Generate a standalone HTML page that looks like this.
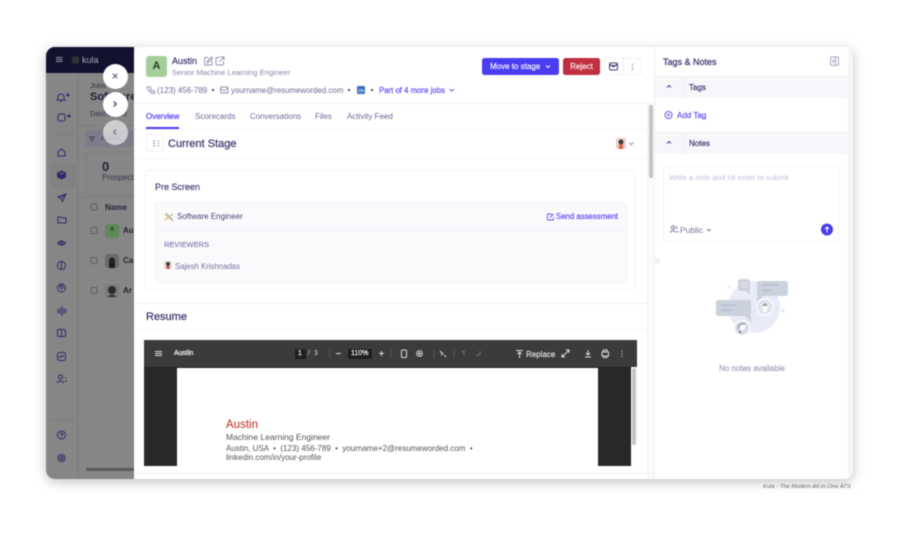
<!DOCTYPE html>
<html><head><meta charset="utf-8"><style>
html,body{margin:0;padding:0;background:#fff}
body{width:900px;height:538px;overflow:hidden;position:relative;font-family:"Liberation Sans",sans-serif}
#win{position:absolute;left:46px;top:47px;width:807px;height:432px;border-radius:9px;overflow:hidden;box-shadow:0 3px 12px rgba(0,0,0,.24);background:#f6f6f6}
.a{position:absolute;white-space:nowrap}
.m{-webkit-text-stroke:.25px}
.abs{position:absolute}
svg{position:absolute;overflow:visible}
#blur{position:absolute;left:0;top:0;width:900px;height:538px;filter:blur(.5px)}
</style></head><body><div id="blur">
<div id="win"></div>
<div class="abs" style="left:46px;top:47px;width:88px;height:432px;border-radius:9px 0 0 9px;background:#868686;overflow:hidden">
 <div class="abs" style="left:0;top:0;width:88px;height:26px;background:#12122e"></div>
 <div class="abs" style="left:31px;top:26px;width:1px;height:406px;background:#7d7d7d"></div>
 <div class="abs" style="left:6px;top:87px;width:22px;height:1px;background:#7d7d7d"></div>
 <div class="abs" style="left:4px;top:372px;width:24px;height:1px;background:#7d7d7d"></div>
 <div class="abs" style="left:5px;top:116px;width:25px;height:25px;background:#828285;border-radius:4px"></div>
 <div class="abs" style="left:32px;top:78px;width:56px;height:1px;background:#7d7d7d"></div>
 <div class="abs" style="left:39px;top:83px;width:49px;height:17px;background:#7d7d8a;border-radius:3px"></div>
 <div class="abs" style="left:39px;top:105px;width:60px;height:42px;border:1px solid #7f7f7f;border-radius:4px"></div>
 <div class="abs" style="left:32px;top:150px;width:56px;height:1px;background:#7d7d7d"></div>
 <div class="abs" style="left:40px;top:421px;width:48px;height:3px;background:#5a5a5a"></div>
</div>
<svg width="900" height="538" style="left:0;top:0" fill="none" stroke="#2f2a66" stroke-width="1">
 <path d="M56 57.500h6.500M56 59.500h6.500M56 61.500h6.500" stroke="#8f8fa2"/>
 <rect x="72" y="56.500" width="7" height="7" rx="2" fill="#333" stroke="none"/>
 <path d="M58 97a3 3 0 0 1 6 0v2l1 1h-8l1-1zM60 101.500h2"/><circle cx="68" cy="95" r="1" fill="#2f2a66"/>
 <rect x="58" y="114" width="7" height="7" rx="2"/><circle cx="69" cy="116" r="1" fill="#2f2a66"/>
 <path d="M58 152l3.500-3 3.500 3v4h-7z"/>
 <path d="M61.500 171l4 2v4l-4 2-4-2v-4zM57.500 173l4 2 4-2M61.500 175v4" fill="#2f2a66" stroke="#2f2a66"/>
 <path d="M66 194l-8 3 3 1.500 1.500 3zM61 198.500l5-4.500"/>
 <path d="M58 217h3l1 1h4v5h-8z"/>
 <path d="M57.500 243q4-4 8 0q-4 4-8 0z"/><circle cx="61.500" cy="243" r="1.200"/>
 <circle cx="61.500" cy="265.500" r="4"/><path d="M61.500 261.500v8" />
 <circle cx="61.500" cy="288" r="4"/><circle cx="61.500" cy="287" r="1.500"/>
 <path d="M58 309v4M60 308v6M62 306v10M64 308v6M66 309v4"/>
 <rect x="57.500" y="329.500" width="8" height="7" rx="1.500"/><path d="M61.500 329.500v7"/>
 <rect x="57.500" y="352.500" width="8" height="8" rx="2"/><path d="M59 358l2-2 1 1 2-2"/>
 <circle cx="60.500" cy="377" r="2"/><path d="M57 383q3-4 7 0M65 377l1 1M65 381h2"/>
 <circle cx="61.500" cy="435" r="4"/><path d="M60 434q1.500-2 3 0l-1.500 1.500v1"/><circle cx="61.500" cy="458" r="3.500"/><circle cx="61.500" cy="458" r="1.500"/>
 <rect x="91" y="204" width="6" height="6" rx="1" stroke="#5f5f5f"/>
 <rect x="91" y="227.500" width="6" height="6" rx="1" stroke="#5f5f5f"/>
 <rect x="91" y="257.500" width="6" height="6" rx="1" stroke="#5f5f5f"/>
 <rect x="91" y="287.500" width="6" height="6" rx="1" stroke="#5f5f5f"/>
 <path d="M89 137h6M90 139h4M91 141h2" stroke="#3d3a55"/>
 <rect x="105" y="224" width="14" height="14" rx="3" fill="#5d8a57" stroke="none"/>
 <rect x="105" y="254" width="14" height="14" rx="3" fill="#6a6a6a" stroke="none"/>
 <rect x="105" y="284" width="14" height="14" rx="3" fill="#7c7c7c" stroke="none"/>
 <circle cx="112" cy="290" r="4" fill="#2b2b2b" stroke="none"/><path d="M108 297q4-5 8 0" fill="#2b2b2b" stroke="none"/>
 <path d="M109 268v-8q3-5 6 0v8" fill="#1e1e1e" stroke="none"/>
</svg>
<div class="a" style="left:82px;top:55px;font-size:9px;color:#a8a8b8">kula</div>
<div class="a" style="left:90px;top:81px;font-size:7.500px;color:#2e2e45">Jobs</div>
<div class="a" style="left:90px;top:91px;font-size:11px;font-weight:bold;color:#22223a">Software</div>
<div class="a" style="left:90px;top:109px;font-size:7.500px;color:#35354a">Dashboard</div>
<div class="a" style="left:101px;top:134px;font-size:7.500px;color:#55557a">Filters</div>
<div class="a" style="left:102px;top:159px;font-size:13px;font-weight:bold;color:#25253a">0</div>
<div class="a" style="left:102px;top:173px;font-size:8px;color:#35354a">Prospect</div>
<div class="a" style="left:105px;top:203px;font-size:8px;font-weight:bold;color:#25253a">Name</div>
<div class="a" style="left:123px;top:226px;font-size:8px;font-weight:bold;color:#25253a">Au</div>
<div class="a" style="left:123px;top:256px;font-size:8px;font-weight:bold;color:#25253a">Ca</div>
<div class="a" style="left:123px;top:286px;font-size:8px;font-weight:bold;color:#25253a">Ar</div>
<div class="a" style="left:110px;top:227px;font-size:6px;font-weight:bold;color:#1d3a1a">A</div>

<!-- panel -->
<div class="abs" style="left:134px;top:47px;width:714px;height:432px;background:#fff;border-radius:9px 0 0 0;overflow:hidden">
 <div class="abs" style="left:0;top:56px;width:520px;height:1px;background:#f1f1f5"></div>
 <div class="abs" style="left:0;top:82px;width:513px;height:1px;background:#f1f1f5"></div>
 <div class="abs" style="left:0;top:111px;width:513px;height:1px;background:#f3f3f7"></div>
 <div class="abs" style="left:0;top:256px;width:513px;height:1px;background:#f1f1f5"></div>
 <div class="abs" style="left:0;top:282px;width:513px;height:1px;background:#f3f3f7"></div>
 <div class="abs" style="left:513px;top:57px;width:7px;height:375px;background:#fafafa;border-left:1px solid #f1f1f4;box-sizing:border-box"></div>
 <div class="abs" style="left:515px;top:58px;width:4px;height:73px;background:#c4c4c4;border-radius:2px"></div>
 <div class="abs" style="left:520px;top:0;width:1px;height:432px;background:#eeeef2"></div>
 <div class="abs" style="left:0;top:426px;width:520px;height:1px;background:#f1f1f3"></div>
 <div class="abs" style="left:12px;top:9px;width:21px;height:21px;background:#a5cf99;border-radius:3px;color:#1f3a1c;font-size:11px;font-weight:bold;text-align:center;line-height:21px">A</div>
 <div class="abs" style="left:11px;top:123px;width:490px;height:120px;border:1px solid #f3f3f8;border-radius:4px;box-sizing:border-box"></div>
 <div class="abs" style="left:21px;top:155px;width:472px;height:81px;background:#fafafd;border:1px solid #f0f0fa;border-radius:4px;box-sizing:border-box"></div>
 <div class="abs" style="left:21px;top:183px;width:472px;height:1px;background:#f0f0fa"></div>
 <div class="abs" style="left:12px;top:80px;width:33px;height:1.500px;background:#4a3cf0"></div>
 <div class="abs" style="left:12px;top:87px;width:18px;height:18px;border:1px solid #eeeef6;border-radius:3px;box-sizing:border-box"></div>
</div>
<div class="a m" style="left:172px;top:56px;font-size:9px;color:#3d3670">Austin</div>
<div class="a" style="left:172px;top:68px;font-size:7.700px;color:#8c86ae">Senior Machine Learning Engineer</div>
<div class="a" style="left:157px;top:86px;font-size:8px;color:#6f6996">(123) 456-789</div>
<div class="a" style="left:231px;top:86px;font-size:7.900px;color:#6f6996">yourname@resumeworded.com</div>
<div class="a m" style="left:379px;top:86px;font-size:7.800px;color:#6a58f5">Part of 4 more jobs</div>
<svg width="900" height="538" style="left:0;top:0" fill="none" stroke="#8f8ab0" stroke-width=".9">
 <path d="M208.500 57.500h-3a1 1 0 0 0-1 1v5.500a1 1 0 0 0 1 1h5.500a1 1 0 0 0 1-1v-3M207 61.500l4.500-4.500 1.200 1.200-4.500 4.500h-1.200z"/>
 <path d="M219.500 57.500h-2.500a1 1 0 0 0-1 1v5.500a1 1 0 0 0 1 1h5.500a1 1 0 0 0 1-1v-2.500M219.500 62l4-4.500M220.500 57h3.500v3.500"/>
 <path d="M148 87l2-.5 1 2-1 1 2 2 1-1 2 1-.5 2q-6 0-7.500-6.500z" />
 <rect x="220.500" y="87" width="7.500" height="6" rx="1"/><path d="M220.500 88.500l3.700 2.500 3.800-2.500"/>
 <circle cx="213" cy="90" r="1.100" fill="#3d3670" stroke="none"/><circle cx="349" cy="90" r="1.100" fill="#3d3670" stroke="none"/><circle cx="372" cy="90" r="1.100" fill="#3d3670" stroke="none"/>
 <rect x="357" y="86" width="8" height="8" rx="1" fill="#3a6fbe" stroke="none"/>
 <path d="M359 89v3.500M361 92.500v-3.500M361 90.500q2-1.500 2.500.5v1.500" stroke="#e8eefa" stroke-width=".7"/>
 <path d="M449.500 89l2.200 2.200 2.200-2.200" stroke="#6a58f5"/>
 <path d="M153 141h2M153 143.500h2M153 146h2M157.500 141h1.500M157.500 143.500h1.500M157.500 146h1.500" stroke="#9590b5"/>
 <rect x="616" y="138" width="10" height="11" rx="2" fill="#e8cfc8" stroke="none"/><circle cx="621" cy="142" r="2.500" fill="#3f3a34" stroke="none"/><rect x="619" y="144.500" width="4" height="4.500" fill="#d8634a" stroke="none"/>
 <path d="M629 142.500l2.200 2.200 2.200-2.200"/>
 <path d="M165 214l8 7M165 220l8-6" stroke="#e8b467" stroke-width="1.300"/><path d="M166 213l7 7" stroke="#8ed0e0" stroke-width="1.100"/>
 <path d="M552 214h-4.500v6h6v-3M550 217.500l3.500-3.500" stroke="#6a58f5"/>
 <rect x="164" y="261" width="8" height="8" rx="2" fill="#e8dcd4" stroke="none"/><circle cx="168" cy="264" r="2" fill="#3f3a34" stroke="none"/><rect x="166.500" y="266" width="3" height="3" fill="#c9533f" stroke="none"/>
</svg>
<!-- buttons -->
<div class="abs m" style="left:482px;top:58px;width:77px;height:17px;background:#4a3cf0;border-radius:2.500px;color:#e8e6ff;font-size:8px;line-height:17px;padding-left:8px;box-sizing:border-box">Move to stage</div>
<svg width="900" height="538" style="left:0;top:0" fill="none"><path d="M546 65.500l2 2 2-2" stroke="#fff"/></svg>
<div class="abs m" style="left:563px;top:58px;width:37px;height:17px;background:#c02f3f;border-radius:2.500px;color:#f6dfe2;font-size:8px;line-height:17px;text-align:center">Reject</div>
<div class="abs" style="left:604px;top:58px;width:38px;height:17px;border:1px solid #f2f2f7;border-radius:3px;box-sizing:border-box"></div>
<div class="abs" style="left:623px;top:59px;width:1px;height:15px;background:#f0f0f5"></div>
<svg width="900" height="538" style="left:0;top:0" fill="none" stroke="#46427a">
 <rect x="609.500" y="63" width="8" height="7" rx="1.500"/><path d="M609.500 65.500h8M609.500 64l4 3 4-3"/>
 <path d="M632.500 64v.8M632.500 66.500v.8M632.500 69v.8" stroke-width="1.200"/>
</svg>
<!-- tabs -->
<div class="a m" style="left:146px;top:112px;font-size:8px;color:#5a4af2">Overview</div>
<div class="a" style="left:195px;top:112px;font-size:8px;color:#6f6996">Scorecards</div>
<div class="a" style="left:250px;top:112px;font-size:8px;color:#6f6996">Conversations</div>
<div class="a" style="left:315px;top:112px;font-size:8px;color:#6f6996">Files</div>
<div class="a" style="left:347px;top:112px;font-size:8px;color:#6f6996">Activity Feed</div>
<div class="a m" style="left:168px;top:138px;font-size:11px;color:#3d3670">Current Stage</div>
<div class="a m" style="left:155px;top:182px;font-size:9px;color:#4f4980">Pre Screen</div>
<div class="a" style="left:177px;top:212px;font-size:8px;color:#4a4478">Software Engineer</div>
<div class="a m" style="left:556px;top:212px;font-size:7.800px;color:#6a58f5">Send assessment</div>
<div class="a m" style="left:164px;top:240px;font-size:7.500px;color:#8f89b5">REVIEWERS</div>
<div class="a" style="left:175px;top:262px;font-size:7.800px;color:#76709e">Sajesh Krishnadas</div>
<div class="a m" style="left:146px;top:311px;font-size:11px;color:#3d3670">Resume</div>
<!-- pdf -->
<div class="abs" style="left:144px;top:340px;width:493px;height:126px;background:#282828;overflow:hidden">
 <div class="abs" style="left:0;top:0;width:493px;height:27px;background:#3b3b3b;box-shadow:0 1px 1px #222"></div>
 <div class="abs" style="left:33px;top:28px;width:421px;height:98px;background:#fff"></div>
 <div class="abs" style="left:487px;top:27px;width:6px;height:99px;background:#fdfdfd"></div>
 <div class="abs" style="left:488px;top:28px;width:4px;height:77px;background:#c4c4c4;border-radius:2px"></div>
 <div class="abs" style="left:151px;top:9px;width:11px;height:10px;background:#1f1f1f"></div>
 <div class="abs" style="left:204px;top:9px;width:24px;height:10px;background:#1f1f1f"></div>
</div>
<div class="a m" style="left:174px;top:349.500px;font-size:7px;color:#f0f0f0">Austin</div>
<div class="a m" style="left:298px;top:349.500px;font-size:7px;color:#e8e8e8">1</div>
<div class="a" style="left:308px;top:349.500px;font-size:7px;color:#d8d8d8">/ &nbsp;3</div>
<div class="a m" style="left:351px;top:349.500px;font-size:7px;color:#e8e8e8">110%</div>
<div class="a m" style="left:526px;top:349.500px;font-size:8px;color:#d8d8d8">Replace</div>
<svg width="900" height="538" style="left:0;top:0" fill="none" stroke="#dcdcdc">
 <path d="M155 351.500h7M155 353.500h7M155 355.500h7"/>
 <path d="M336 353.500h5M379 353.500h5M381.500 351v5"/>
 <path d="M329.500 349v9M391 349v9M434 349v9M454 349v9" stroke="#555"/>
 <rect x="401.500" y="350" width="5" height="7.500" rx="1"/>
 <circle cx="419.500" cy="353.500" r="2.800"/><circle cx="419.500" cy="353.500" r=".8" fill="#dcdcdc"/>
 <path d="M440 351l3 3M444 355l2 2M441 355l2-2"/>
 <path d="M462 352l2-1v4M476 355q3 1 4-2M480 351v2" stroke="#777"/>
 <path d="M516 350.500h7M519.500 358v-6M517.500 354l2-2 2 2"/>
 <path d="M562 357l7-7M562 354v3h3M566 350h3v3"/>
 <path d="M588 350v4.500M586 353l2 2 2-2M585 357h6"/>
 <rect x="602" y="352" width="6.500" height="4"/><path d="M603.500 352v-2h3.500v2M603.500 356v1.500h3.500v-1.500"/>
 <path d="M622 350.500v1M622 353v1M622 355.500v1" stroke-width="1.200"/>
</svg>
<div class="a" style="left:226px;top:418.500px;font-size:11.500px;color:#c6281c">Austin</div>
<div class="a" style="left:226px;top:432px;font-size:8.500px;color:#555">Machine Learning Engineer</div>
<div class="a" style="left:226px;top:444px;font-size:8px;color:#555">Austin, USA &nbsp;•&nbsp; (123) 456-789 &nbsp;•&nbsp; yourname+2@resumeworded.com &nbsp;•</div>
<div class="a" style="left:226px;top:453px;font-size:8px;color:#555">linkedin.com/in/your-profile</div>
<!-- right -->
<div class="a m" style="left:663px;top:56.500px;font-size:9px;color:#3d3670">Tags &amp; Notes</div>
<div class="abs" style="left:655px;top:76px;width:193px;height:22px;background:#f7f7fb;border-top:1px solid #f0f0f5;box-sizing:border-box"></div>
<div class="abs" style="left:655px;top:132px;width:193px;height:22px;background:#f7f7fb;border-top:1px solid #f0f0f5;box-sizing:border-box"></div>
<div class="abs" style="left:683px;top:76px;width:1px;height:22px;background:#f0f0f6"></div>
<div class="abs" style="left:683px;top:132px;width:1px;height:22px;background:#f0f0f6"></div>
<div class="a m" style="left:689px;top:82.500px;font-size:8px;color:#4a4478">Tags</div>
<div class="a m" style="left:689px;top:138.500px;font-size:8px;color:#4a4478">Notes</div>
<div class="a m" style="left:677px;top:110.500px;font-size:8px;color:#6a58f5">Add Tag</div>
<div class="abs" style="left:663px;top:166px;width:176px;height:76px;border:1px solid #f2f2f7;border-radius:4px;box-sizing:border-box"></div>
<div class="a" style="left:669px;top:173px;font-size:7.700px;color:#c2bfdb">Write a note and hit enter to submit</div>
<div class="a" style="left:680px;top:225px;font-size:8.500px;color:#7a7599">Public</div>
<div class="a m" style="left:719px;top:363.500px;font-size:8px;color:#a8a5c4">No notes available</div>
<div class="a" style="left:763px;top:483.500px;font-size:5.800px;font-style:italic;color:#666">Kula - The Modern All-In-One ATS</div>
<svg width="900" height="538" style="left:0;top:0" fill="none">
 <rect x="830.500" y="57" width="8" height="8.500" rx="1.500" stroke="#a5a2c0"/><path d="M835.500 57v8.500M832.500 59.500l1.500 1.800-1.500 1.800" stroke="#a5a2c0"/>
 <path d="M667 87.500l2-2 2 2M667 143.500l2-2 2 2" stroke="#46427a"/>
 <circle cx="668.500" cy="115" r="3.500" stroke="#6a58f5"/><circle cx="668.500" cy="115" r="1.200" fill="#6a58f5"/>
 <circle cx="673" cy="227.500" r="1.600" stroke="#7a7599"/><path d="M670 232.500q3-3.500 6 0M676 226.500q2 1 0 2.500M677 231l1.500 1.500" stroke="#7a7599"/>
 <path d="M707 229l1.800 1.800 1.800-1.800" stroke="#7a7599"/>
 <circle cx="827" cy="229.500" r="6" fill="#4a3cf0"/><path d="M827 232.500v-5.500M825 229l2-2 2 2" stroke="#fff"/>
 <path d="M655.500 258.500h1.500M655.500 260.500h1.500M655.500 262.500h1.500M658 258.500h1.500M658 260.500h1.500M658 262.500h1.500" stroke="#d8d8e4"/>
 <!-- illustration -->
 <circle cx="754" cy="307" r="26" fill="#e9ecf8"/>
 <rect x="716" y="300" width="35" height="16" rx="2.500" fill="#cbd1dd"/><path d="M745 316h6v6z" fill="#cbd1dd"/>
 <rect x="757" y="281" width="31" height="15" rx="2.500" fill="#cbd1dd"/><path d="M757 296h6l-6 6z" fill="#cbd1dd"/>
 <rect x="738" y="279" width="12" height="12" rx="2.500" fill="#cbd1dd"/><path d="M746 291h4v4z" fill="#cbd1dd"/>
 <circle cx="744" cy="285" r="2.500" stroke="#f2f3f8" stroke-width=".8"/>
 <path d="M721 305h15M721 310.500h12M762 285h16M762 290.500h9" stroke="#aeb4c4" stroke-width="1.100"/>
 <circle cx="765" cy="307" r="8" fill="#dfe3ef" stroke="#fff" stroke-width="1.200"/>
 <circle cx="765" cy="306" r="3.300" fill="#fff"/><path d="M762 306q3-6 6 0" fill="#9aa0ae"/><rect x="763.500" y="309" width="3" height="3" fill="#fff"/>
 <circle cx="742" cy="328" r="7.500" fill="#d7dbe8" stroke="#fff" stroke-width="1.200"/>
 <circle cx="742.500" cy="327" r="3" fill="#fff"/><path d="M738 329q1-6 7-5" stroke="#6f7585"/><path d="M739 331l2 2" stroke="#6f7585" stroke-width="1.400"/>
 <circle cx="729" cy="287" r=".9" fill="#d6d9e8"/><circle cx="783" cy="310.500" r="1.600" fill="#dfe2f0"/>
</svg>
<!-- circles -->
<div class="abs" style="left:102.500px;top:63.500px;width:25px;height:25px;border-radius:50%;background:#fff"></div>
<div class="abs" style="left:102.500px;top:91.500px;width:25px;height:25px;border-radius:50%;background:#fff"></div>
<div class="abs" style="left:102.500px;top:119.500px;width:25px;height:25px;border-radius:50%;background:rgba(245,245,245,.65)"></div>
<svg width="900" height="538" style="left:0;top:0" fill="none" stroke="#4a4578" stroke-width="1">
 <path d="M112.700 73.700l4.600 4.600M117.300 73.700l-4.600 4.600"/>
 <path d="M113.700 101.500l2.500 2.500-2.500 2.500" stroke-width="1.300"/>
 <path d="M116.200 129.500l-2.500 2.500 2.500 2.500" stroke="#666"/>
</svg>
</div></body></html>
